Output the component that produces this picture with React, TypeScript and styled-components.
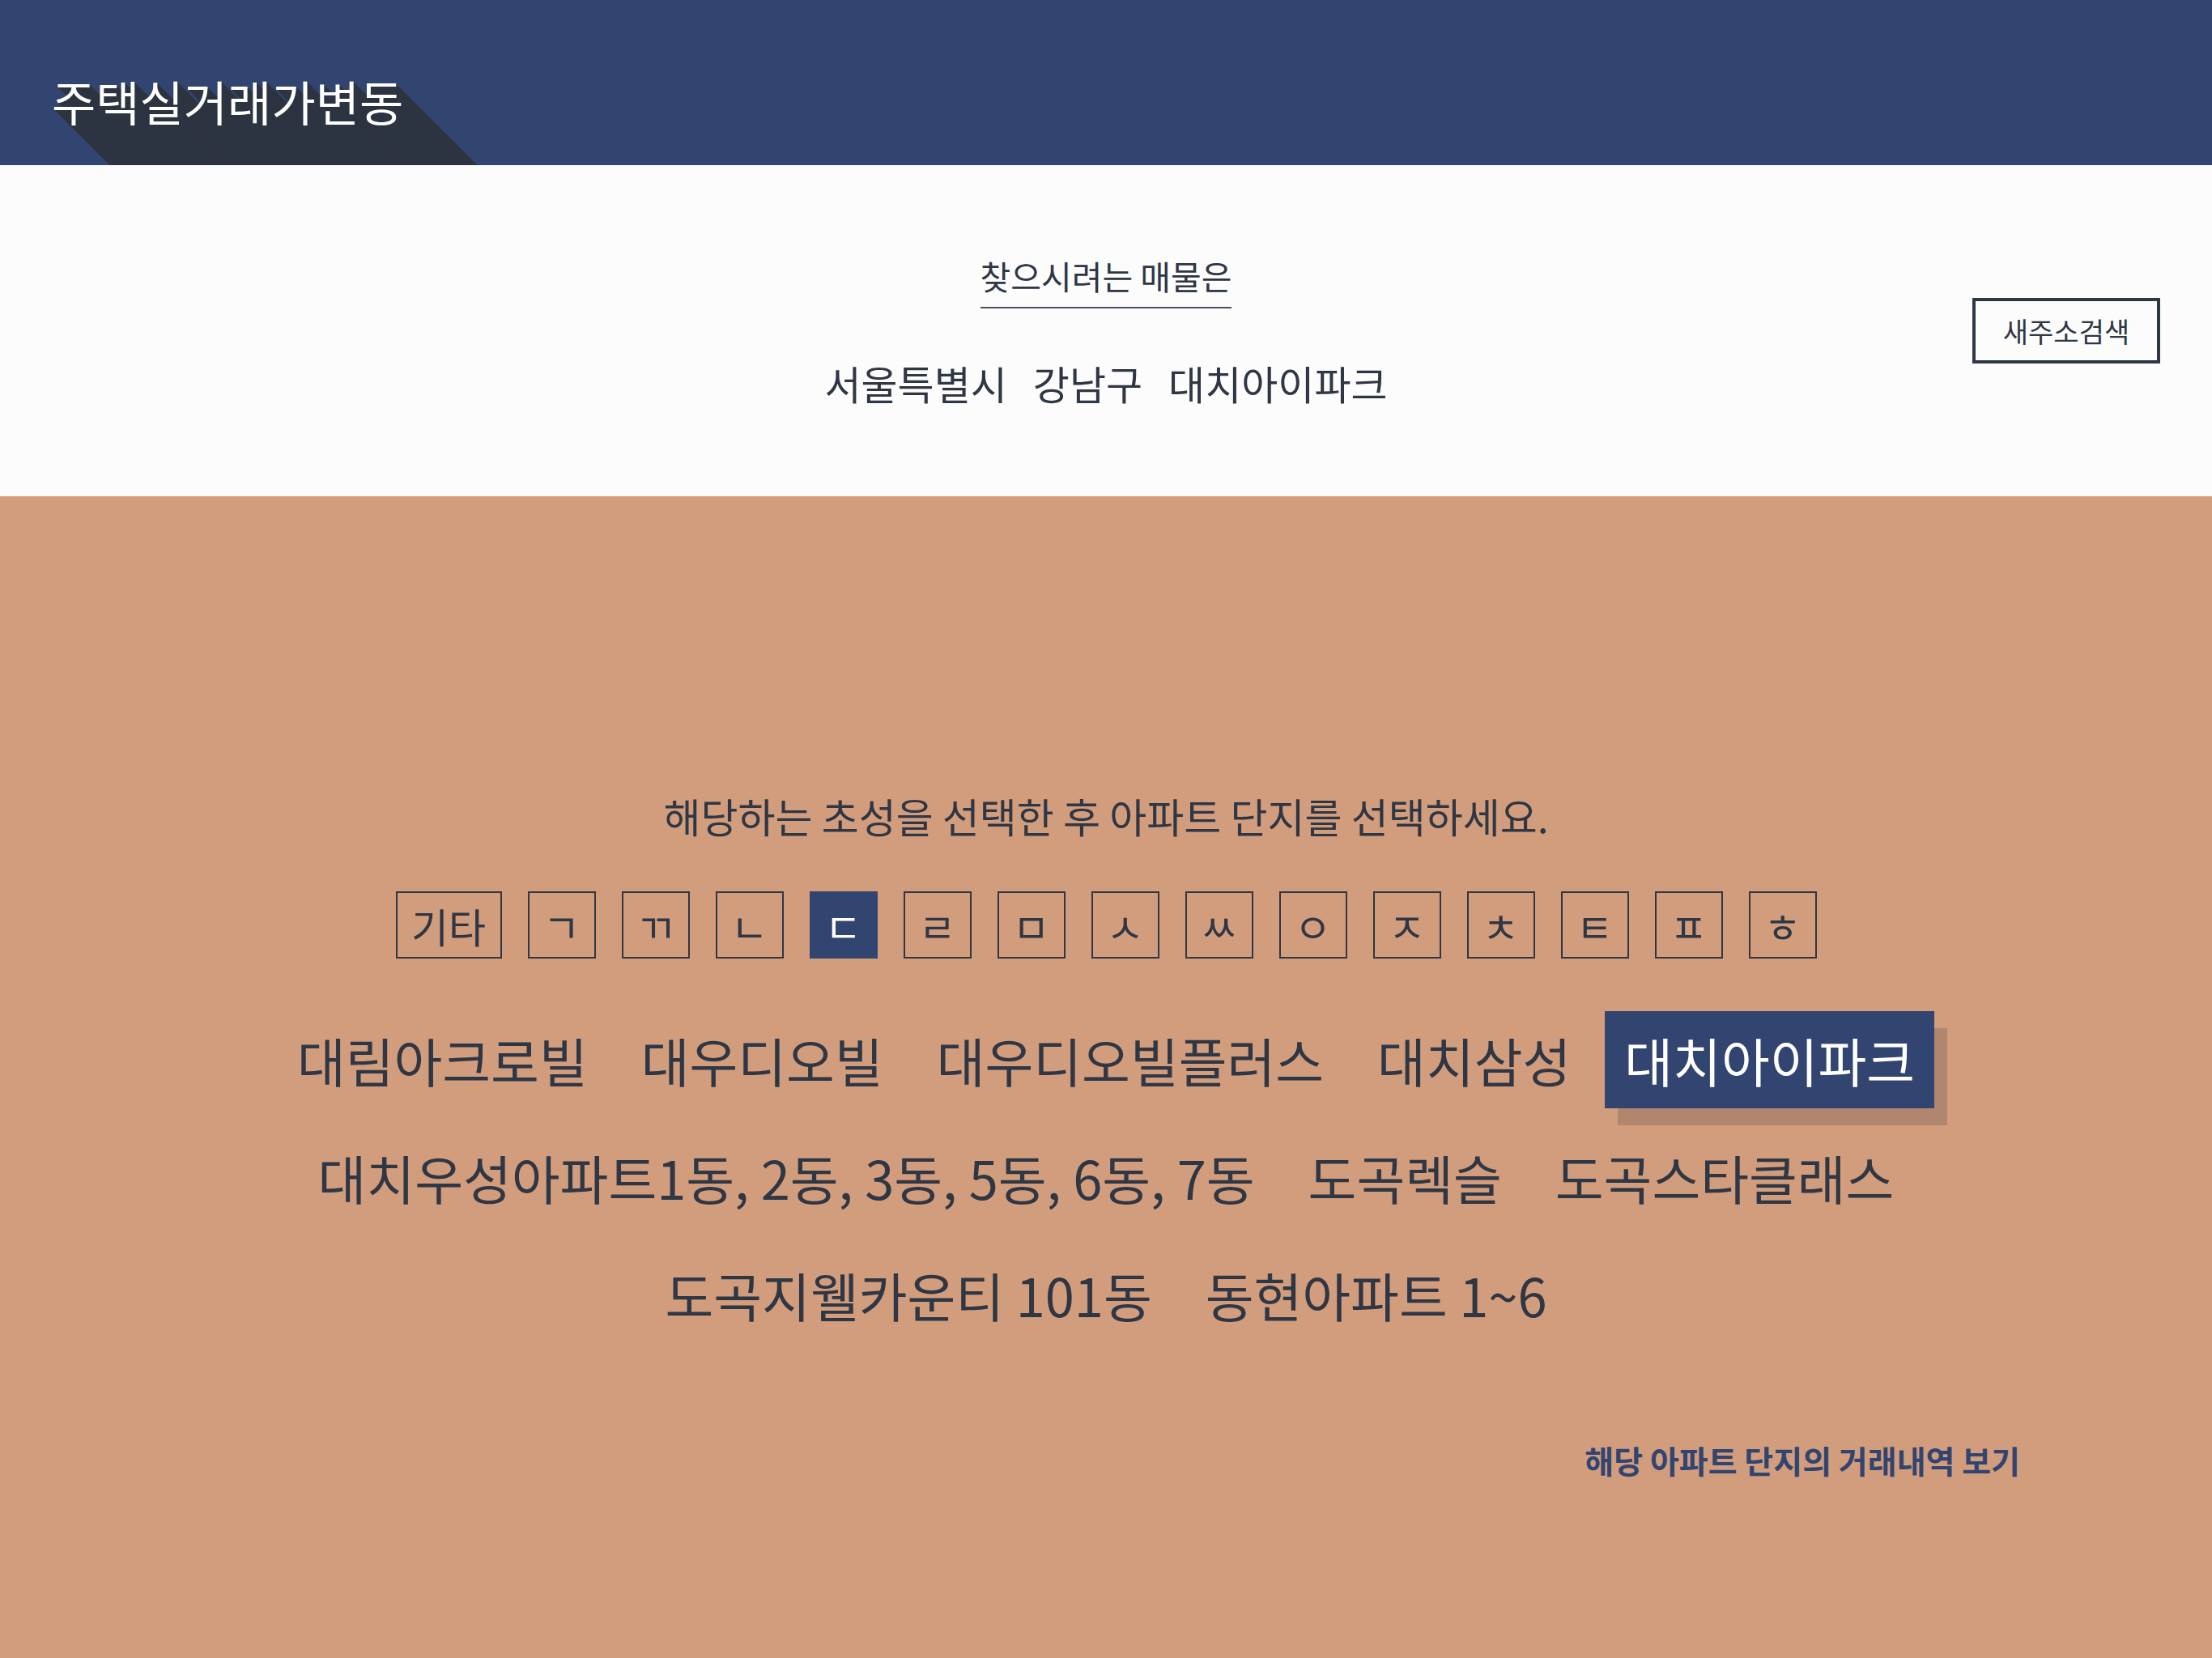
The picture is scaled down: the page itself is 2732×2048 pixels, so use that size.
import React, { useState } from "react";
import styled, { createGlobalStyle, css } from "styled-components";

const NAVY = "#324570";
const INK = "#2f3644";
const TAN = "#d29d7d";
const SHADOW = "#2d3441";

const longShadow = Array.from({ length: 170 }, (_, i) => `${i + 1}px ${i + 1}px 0 ${SHADOW}`).join(", ");

const GlobalStyle = createGlobalStyle`
  html, body { margin: 0; padding: 0; }
  body {
    font-family: "Noto Sans CJK KR", "Noto Sans", sans-serif;
    color: ${INK};
    background: ${TAN};
  }
  button { font: inherit; }
  * { box-sizing: border-box; }
`;

const Page = styled.div`
  display: flex;
  flex-direction: column;
  min-height: 100vh;
`;

const Header = styled.header`
  height: 204px;
  background: ${NAVY};
  overflow: hidden;
  padding: 90px 0 0 64px;
`;

const Title = styled.h1`
  margin: 0;
  font-size: 59px;
  line-height: 70px;
  font-weight: 400;
  color: #ffffff;
  text-shadow: ${longShadow};
`;

const SearchSection = styled.section`
  height: 409px;
  background: #fcfcfd;
  display: grid;
  grid-template-columns: 1fr auto 1fr;
  align-items: center;
  padding: 0 64px;
`;

const Summary = styled.div`
  grid-column: 2;
  display: flex;
  flex-direction: column;
  align-items: center;
`;

const Caption = styled.div`
  font-size: 41px;
  line-height: 50px;
  padding-bottom: 14px;
  border-bottom: 2px solid #4a4f5c;
`;

const AddressRow = styled.div`
  display: flex;
  gap: 32px;
  margin-top: 62px;
  font-size: 49px;
  line-height: 60px;
`;

const NewSearchButton = styled.button`
  grid-column: 3;
  justify-self: end;
  width: 232px;
  height: 81px;
  border: 4px solid ${INK};
  background: transparent;
  color: ${INK};
  font-size: 34px;
  padding: 0;
  cursor: pointer;
`;

const PickerSection = styled.main`
  flex: 1;
  background: ${TAN};
  padding-top: 364px;
  padding-bottom: 120px;
  display: flex;
  flex-direction: column;
  align-items: center;
`;

const Guide = styled.p`
  margin: 0;
  font-size: 50px;
  line-height: 60px;
`;

const InitialBar = styled.div`
  display: flex;
  gap: 32px;
  margin-top: 64px;
`;

const InitialButton = styled.button<{ $wide?: boolean; $active?: boolean }>`
  width: ${(p) => (p.$wide ? 131 : 84)}px;
  height: 83px;
  padding: 0;
  border: 2px solid ${INK};
  background: transparent;
  color: ${INK};
  font-size: 50px;
  line-height: 1;
  cursor: pointer;
  ${(p) =>
    p.$active &&
    css`
      background: ${NAVY};
      border-color: ${NAVY};
      color: #ffffff;
    `}
`;

const ComplexList = styled.div`
  width: 2400px;
  display: flex;
  flex-wrap: wrap;
  justify-content: center;
  column-gap: 18px;
  row-gap: 25px;
  margin-top: 65px;
`;

const ComplexItem = styled.button<{ $active?: boolean }>`
  height: 120px;
  padding: 0 24px;
  border: 0;
  background: transparent;
  color: ${INK};
  font-size: 65px;
  line-height: 120px;
  white-space: nowrap;
  cursor: pointer;
  ${(p) =>
    p.$active &&
    css`
      background: ${NAVY};
      color: #ffffff;
      box-shadow: 16px 21px 0 #b1866e;
    `}
`;

const LinkRow = styled.div`
  align-self: stretch;
  display: flex;
  justify-content: flex-end;
  padding-right: 237px;
  margin-top: 119px;
`;

const DetailLink = styled.a`
  font-size: 39px;
  line-height: 50px;
  font-weight: 700;
  color: ${NAVY};
  text-decoration: none;
  cursor: pointer;
`;

const initials = ["기타", "ㄱ", "ㄲ", "ㄴ", "ㄷ", "ㄹ", "ㅁ", "ㅅ", "ㅆ", "ㅇ", "ㅈ", "ㅊ", "ㅌ", "ㅍ", "ㅎ"];

const complexes = [
  "대림아크로빌",
  "대우디오빌",
  "대우디오빌플러스",
  "대치삼성",
  "대치아이파크",
  "대치우성아파트1동, 2동, 3동, 5동, 6동, 7동",
  "도곡렉슬",
  "도곡스타클래스",
  "도곡지웰카운티 101동",
  "동현아파트 1~6",
];

export default function App() {
  const [initial, setInitial] = useState("ㄷ");
  const [complex, setComplex] = useState("대치아이파크");

  return (
    <Page>
      <GlobalStyle />
      <Header>
        <Title>주택실거래가변동</Title>
      </Header>
      <SearchSection>
        <Summary>
          <Caption>찾으시려는 매물은</Caption>
          <AddressRow>
            <span>서울특별시</span>
            <span>강남구</span>
            <span>{complex}</span>
          </AddressRow>
        </Summary>
        <NewSearchButton>새주소검색</NewSearchButton>
      </SearchSection>
      <PickerSection>
        <Guide>해당하는 초성을 선택한 후 아파트 단지를 선택하세요.</Guide>
        <InitialBar>
          {initials.map((c) => (
            <InitialButton key={c} $wide={c.length > 1} $active={c === initial} onClick={() => setInitial(c)}>
              {c}
            </InitialButton>
          ))}
        </InitialBar>
        <ComplexList>
          {complexes.map((c) => (
            <ComplexItem key={c} $active={c === complex} onClick={() => setComplex(c)}>
              {c}
            </ComplexItem>
          ))}
        </ComplexList>
        <LinkRow>
          <DetailLink>해당 아파트 단지의 거래내역 보기</DetailLink>
        </LinkRow>
      </PickerSection>
    </Page>
  );
}
